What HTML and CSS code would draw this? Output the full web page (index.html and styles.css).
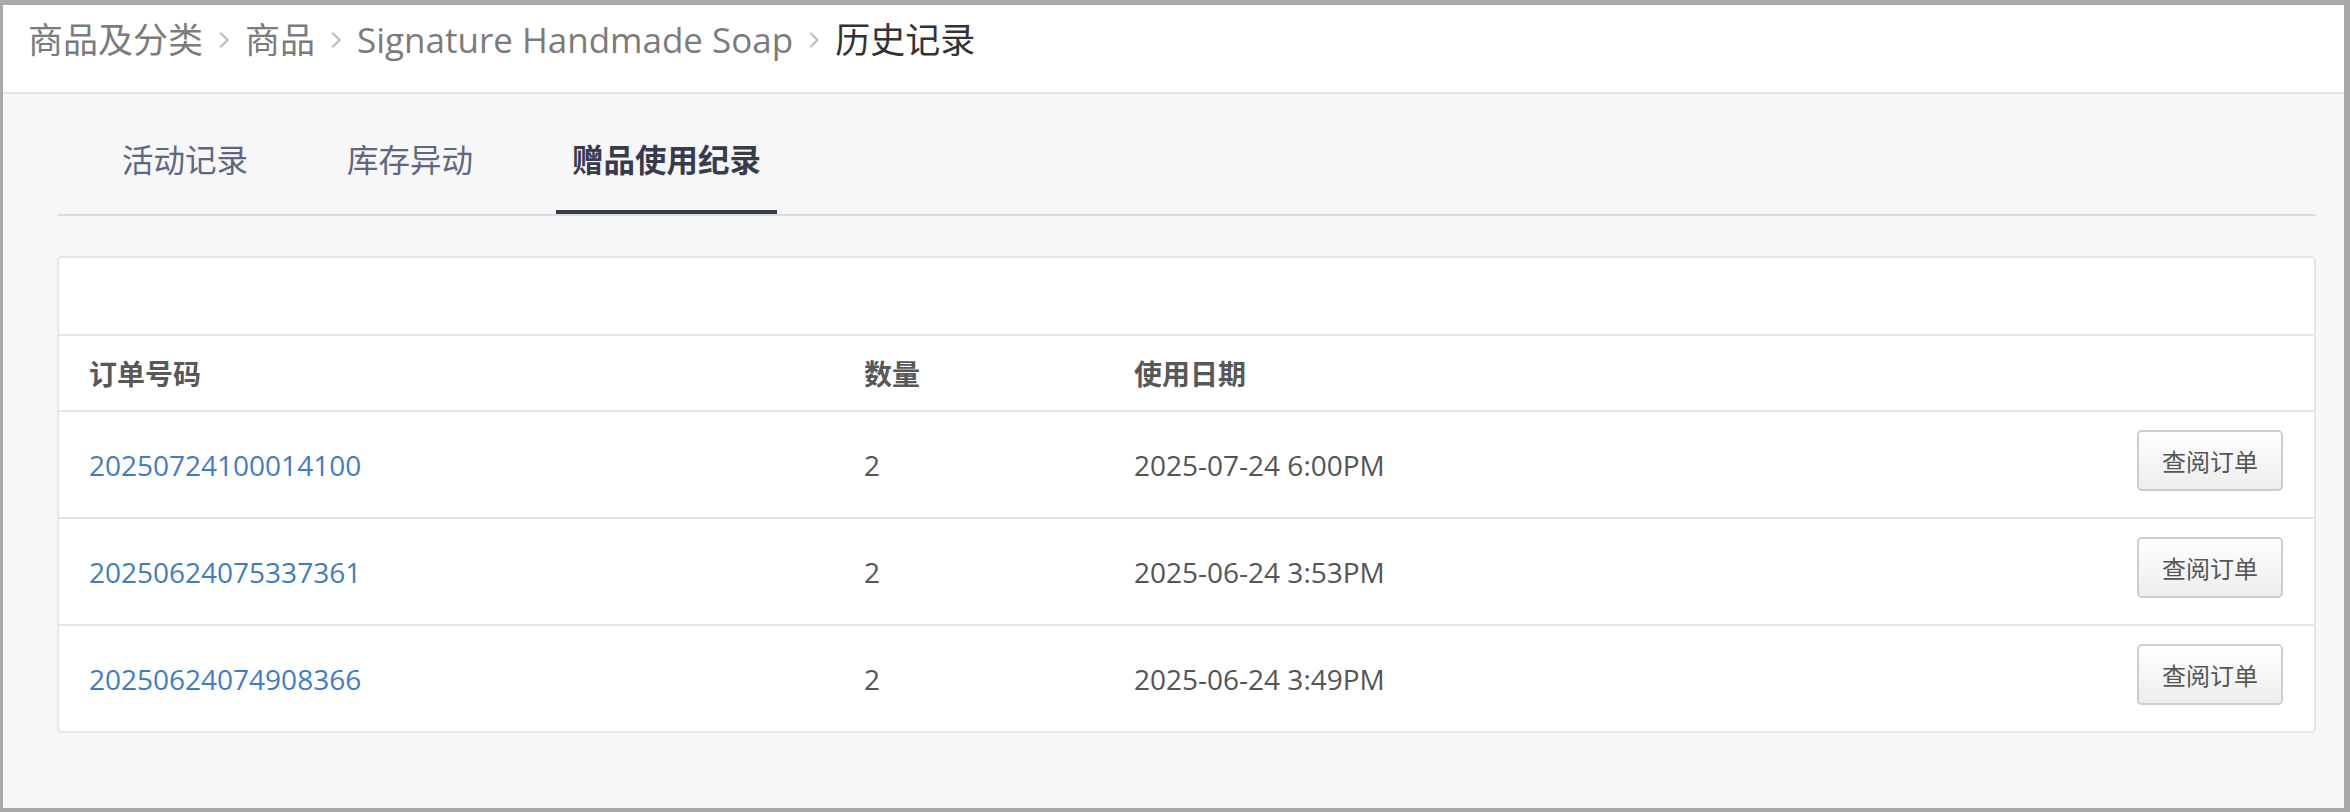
FILE: index.html
```html
<!DOCTYPE html>
<html lang="zh-CN">
<head>
    <meta charset="UTF-8">
    <meta name="viewport" content="width=device-width, initial-scale=1.0">
    <title>历史记录</title>
    <link rel="stylesheet" href="styles.css">
</head>

<body>
  <div class="frame">
    <header class="crumbs">
      <a class="crumb">商品及分类</a>
      <svg class="sep" viewBox="0 0 10 16"><polyline points="2,1.5 8.5,8 2,14.5" /></svg>
      <a class="crumb">商品</a>
      <svg class="sep" viewBox="0 0 10 16"><polyline points="2,1.5 8.5,8 2,14.5" /></svg>
      <a class="crumb">Signature Handmade Soap</a>
      <svg class="sep" viewBox="0 0 10 16"><polyline points="2,1.5 8.5,8 2,14.5" /></svg>
      <span class="crumb current">历史记录</span>
    </header>

    <main class="content">
      <nav class="tabs">
        <a class="tab">活动记录</a>
        <a class="tab">库存异动</a>
        <a class="tab active">赠品使用纪录</a>
      </nav>

      <section class="card">
        <div class="card_top"></div>
        <table class="gifts">
          <colgroup>
            <col class="col_order">
            <col class="col_qty">
            <col>
            <col class="col_action">
          </colgroup>
          <thead>
            <tr>
              <th class="first">订单号码</th>
              <th>数量</th>
              <th>使用日期</th>
              <th></th>
            </tr>
          </thead>
          <tbody>
            <tr>
              <td class="first"><a class="order_link">20250724100014100</a></td>
              <td>2</td>
              <td>2025-07-24 6:00PM</td>
              <td class="action"><button class="btn">查阅订单</button></td>
            </tr>
            <tr>
              <td class="first"><a class="order_link">20250624075337361</a></td>
              <td>2</td>
              <td>2025-06-24 3:53PM</td>
              <td class="action"><button class="btn">查阅订单</button></td>
            </tr>
            <tr>
              <td class="first"><a class="order_link">20250624074908366</a></td>
              <td>2</td>
              <td>2025-06-24 3:49PM</td>
              <td class="action"><button class="btn">查阅订单</button></td>
            </tr>
          </tbody>
        </table>
      </section>
    </main>
  </div>
</body>
</html>
```

FILE: styles.css
```css
html, body { margin: 0; height: 100%; }
body { font-family: "Open Sans", "Noto Sans CJK SC", sans-serif; background: #a9a9a9; }

.frame { box-sizing: border-box; height: 812px; border-style: solid; border-color: #a9a9a9; border-width: 5px 6px 4px 3px; display: flex; flex-direction: column; background: #f7f7f7; }

/* breadcrumb bar */
.crumbs { background: #fff; height: 89px; box-sizing: border-box; padding: 10px 0 0 25px; border-bottom: 2px solid #e6e6e6; display: flex; align-items: flex-start; }
.crumb { font-size: 35px; line-height: 50px; color: #7b7b7b; text-decoration: none; }
.crumb.current { color: #333; }
.sep { width: 10px; height: 16px; margin: 17px 16px 0; fill: none; stroke: #b9c0cc; stroke-width: 2.4; stroke-linecap: round; stroke-linejoin: round; }

.content { flex: 1; padding: 0 28px 0 54px; }

/* tabs */
.tabs { margin-top: 44px; padding-left: 49px; display: flex; gap: 67px; border-bottom: 2px solid #d6dee7; }
.tab { font-size: 31.5px; line-height: 44px; padding: 0 16px 28px; border-bottom: 4px solid transparent; color: #5d6783; cursor: pointer; }
.tab.active { color: #363b4d; font-weight: 700; border-bottom-color: #373c4c; }

/* card + table */
.card { margin-top: 40px; background: #fff; border: 2px solid #e6e6e6; border-radius: 5px; overflow: hidden; }
.card_top { height: 76px; border-bottom: 2px solid #e6e6e6; }

.gifts { width: 100%; border-collapse: separate; border-spacing: 0; table-layout: fixed; font-size: 28px; color: #555; }
.col_order { width: 805px; }
.col_qty { width: 270px; }
.col_action { width: 200px; }
.gifts th, .gifts td { padding: 0; text-align: left; vertical-align: middle; }
.gifts th { height: 74px; font-weight: 700; color: #585858; }
.gifts td { height: 105px; border-top: 2px solid #e3e3e3; }
.gifts .first { padding-left: 30px; }
.gifts .action { text-align: right; padding-right: 31px; }

.order_link { color: #3f7dc5; text-decoration: none; }

.btn { width: 146px; height: 61px; margin-bottom: 8px; border: 2px solid #cdcdcd; border-radius: 5px; background: linear-gradient(#ffffff, #ededed); font-family: "Open Sans", "Noto Sans CJK SC", sans-serif; font-size: 24px; color: #555; padding: 0; }
```
